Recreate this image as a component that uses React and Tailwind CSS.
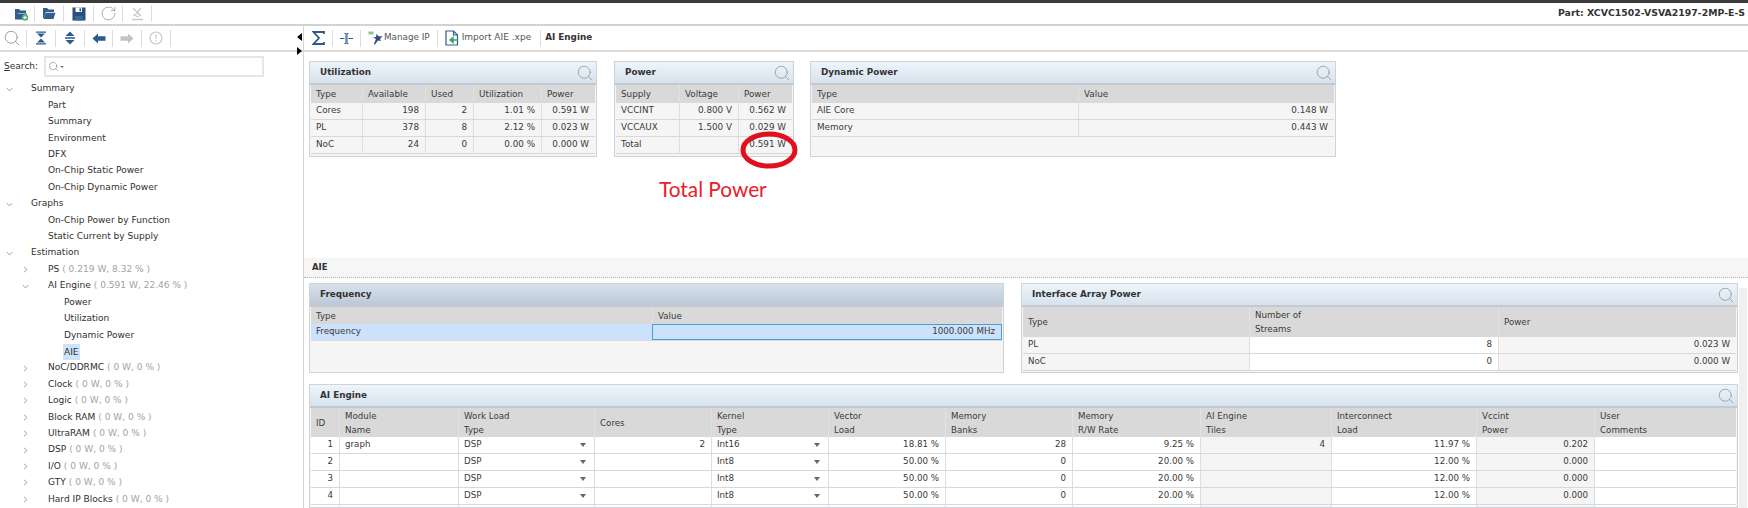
import React from 'react';
import { Search, RotateCw } from 'lucide-react';

const FONT = 'font-["DejaVu_Sans",sans-serif]';

const FolderNew = () => (
  <svg width="15" height="14" viewBox="0 0 15 14">
    <path d="M1 2h4l1.5 1.5H12V6H4L2 12H1z" fill="#2f5f8c" />
    <path d="M1 12.5 3.3 6.5H13l-1.5 6z" fill="#2f5f8c" />
    <circle cx="11" cy="10.5" r="3.2" fill="#4fb56a" />
    <path d="M9.2 10.5h3.6M11 8.7v3.6" stroke="#fff" strokeWidth="1" />
  </svg>
);

const FolderOpen = () => (
  <svg width="14" height="13" viewBox="0 0 14 13">
    <path d="M1 1h4l1.5 1.5H12V5H4L2 11H1z" fill="#2f5f8c" />
    <path d="M1.5 12 4 5.8h9.5L11.5 12z" fill="#2f5f8c" />
  </svg>
);

const Floppy = () => (
  <svg width="14" height="14" viewBox="0 0 14 14">
    <path d="M0.5 0.5h13v13h-13z" fill="#284f82" />
    <path d="M3.5 0.5h6.5v4.5H3.5z" fill="#fff" />
    <path d="M7.5 1.2h1.5v3H7.5z" fill="#284f82" />
    <path d="M3 9h8v4.5H3z" fill="#3d659a" />
  </svg>
);

const DisabledTool = () => (
  <svg width="13" height="14" viewBox="0 0 13 14" fill="none" stroke="#c8c8c8">
    <path d="M2 1 10 9M10 1 6 5.5M4.5 7 2.5 9" strokeWidth="1.3" />
    <path d="M1 12.5h11" strokeWidth="1.5" />
    <circle cx="6.5" cy="8" r="1.8" />
  </svg>
);

const CollapseAll = () => (
  <svg width="12" height="14" viewBox="0 0 12 14">
    <path d="M1 0.5h10v1.3H1zM1 12.2h10v1.3H1z" fill="#2c5c8c" />
    <path d="M2 2.6h8L6 6.4zM2 11.4h8L6 7.6z" fill="#2c5c8c" />
  </svg>
);

const ExpandAll = () => (
  <svg width="12" height="14" viewBox="0 0 12 14">
    <path d="M6 0.5 10.5 5h-9zM6 13.5 1.5 9h9z" fill="#2c5c8c" />
    <path d="M1 6h10v0.8H1zM1 7.3h10v0.8H1z" fill="#2c5c8c" />
  </svg>
);

const BlockArrow = ({ color, flip }) => (
  <svg width="14" height="11" viewBox="0 0 14 11" className={flip ? 'rotate-180' : ''}>
    <path d="M0.5 5.5 6 0.5v2.8h7.5v4.4H6v2.8z" fill={color} />
  </svg>
);

const InfoCircle = () => (
  <svg width="14" height="14" viewBox="0 0 14 14" fill="none" stroke="#c9c9c9">
    <circle cx="7" cy="7" r="6" strokeWidth="1.2" />
    <path d="M7 3.2v4.6M7 9.3v1.4" strokeWidth="1.3" />
  </svg>
);

const SigmaIcon = () => (
  <svg width="13" height="14" viewBox="0 0 13 14" fill="none" stroke="#2c5c8c" strokeWidth="1.8">
    <path d="M12 3V1H1.5L7 7l-5.5 6H12v-2" />
  </svg>
);

const FitIcon = () => (
  <svg width="13" height="15" viewBox="0 0 13 15" fill="none" stroke="#2c5c8c">
    <path d="M0 7.5h4.5M8.5 7.5H13" strokeWidth="1.2" />
    <path d="M4.5 2.5h1.5v10H4.5M8.5 2.5H7v10h1.5" strokeWidth="1" />
  </svg>
);

const ManageIpIcon = () => (
  <svg width="15" height="15" viewBox="0 0 15 15">
    <path d="M0.5 0.5h5v3h-5z" fill="#8cc88c" />
    <path d="M8.5 3 11 5.5 14.5 5 12 8l1 2-3-.5L6.5 14 6 12.5 8 8 5 6.5 8 6z" fill="#2c4f7c" />
  </svg>
);

const ImportIcon = () => (
  <svg width="14" height="16" viewBox="0 0 14 16" fill="none">
    <path d="M1 1h7.5L12.5 5v10H1z" stroke="#2c5c8c" strokeWidth="1.2" fill="#fff" />
    <path d="M8.5 1v4h4" stroke="#2c5c8c" strokeWidth="1.1" />
    <path d="M13 10H8M8 7.5 5 10l3 2.5z" stroke="#3da35d" strokeWidth="1.4" fill="#3da35d" />
  </svg>
);

const Sep = () => <div className="w-px h-[17px] bg-[#dddddd]" />;

const TreeRow = ({ level, open, label, stat, selected, leaf }) => {
  const chevronX = level === 0 ? 'w-[31px] pl-[6px]' : level === 1 ? 'w-[48px] pl-[22px]' : 'w-[64px]';
  return (
    <div className="h-[16.42px] flex items-center text-[9.05px] text-[#303030] whitespace-nowrap">
      <div className={`${chevronX} shrink-0 flex items-center`}>
        {!leaf && (
          <svg width="7" height="7" viewBox="0 0 7 7" fill="none" stroke="#a6a6a6" strokeWidth="1" className={open ? 'rotate-90' : ''}>
            <path d="M2 0.8 5 3.5 2 6.2" />
          </svg>
        )}
      </div>
      <span className={selected ? 'bg-[#cde3fb] px-[1px] -ml-[1px] leading-[16px]' : ''}>{label}</span>
      {stat && <span className="text-[#a3a3a3] ml-[3px]">{stat}</span>}
    </div>
  );
};

const tree = [
  { level: 0, open: true, label: 'Summary' },
  { level: 1, leaf: true, label: 'Part' },
  { level: 1, leaf: true, label: 'Summary' },
  { level: 1, leaf: true, label: 'Environment' },
  { level: 1, leaf: true, label: 'DFX' },
  { level: 1, leaf: true, label: 'On-Chip Static Power' },
  { level: 1, leaf: true, label: 'On-Chip Dynamic Power' },
  { level: 0, open: true, label: 'Graphs' },
  { level: 1, leaf: true, label: 'On-Chip Power by Function' },
  { level: 1, leaf: true, label: 'Static Current by Supply' },
  { level: 0, open: true, label: 'Estimation' },
  { level: 1, label: 'PS', stat: '( 0.219 W, 8.32 % )' },
  { level: 1, open: true, label: 'AI Engine', stat: '( 0.591 W, 22.46 % )' },
  { level: 2, leaf: true, label: 'Power' },
  { level: 2, leaf: true, label: 'Utilization' },
  { level: 2, leaf: true, label: 'Dynamic Power' },
  { level: 2, leaf: true, label: 'AIE', selected: true },
  { level: 1, label: 'NoC/DDRMC', stat: '( 0 W, 0 % )' },
  { level: 1, label: 'Clock', stat: '( 0 W, 0 % )' },
  { level: 1, label: 'Logic', stat: '( 0 W, 0 % )' },
  { level: 1, label: 'Block RAM', stat: '( 0 W, 0 % )' },
  { level: 1, label: 'UltraRAM', stat: '( 0 W, 0 % )' },
  { level: 1, label: 'DSP', stat: '( 0 W, 0 % )' },
  { level: 1, label: 'I/O', stat: '( 0 W, 0 % )' },
  { level: 1, label: 'GTY', stat: '( 0 W, 0 % )' },
  { level: 1, label: 'Hard IP Blocks', stat: '( 0 W, 0 % )' },
];

// one card: title bar + column header + rows, cells are {t, r (right align), w (white), drop}
const Card = ({ title, dark, noSearch, className, cols, headH, rowH, text, header, rows }) => (
  <div className={`${className} border border-[#ccd3da] bg-[#f5f5f5] flex flex-col overflow-hidden shrink-0`}>
    <div className={`h-[23px] shrink-0 flex items-center justify-between pl-[10px] pr-[2px] border-b-2 border-[#c3c9cf] bg-gradient-to-b ${dark ? 'from-[#d9e2ec] to-[#bcc8d6]' : 'from-[#eef5fb] to-[#d6e2ed]'}`}>
      <span className="text-[8.8px] font-bold text-[#333333]">{title}</span>
      {!noSearch && <Search size={18} strokeWidth={1} color="#8f8f8f" />}
    </div>
    <div className={`mx-[1px] ${text} text-[#3a3a3a]`}>
      <div className={`grid ${cols} ${headH} bg-[#d9d9d9]`}>
        {header.map((h, i) => (
          <div key={i} className="flex items-center pl-[5px] leading-[14px] whitespace-pre-line border-l border-[#e2e2e2] first:border-l-0">{h}</div>
        ))}
      </div>
      {rows.map((row, i) => (
        <div key={i} className={`grid ${cols} ${rowH} border-b border-[#d8d8d8]`}>
          {row.map((c, j) => (
            <div
              key={j}
              className={`flex items-center pl-[5px] pr-[6px] whitespace-nowrap ${c.focus ? 'border-[1.5px] border-[#4b9fd0]' : 'border-l border-[#dedede] first:border-l-0'} ${c.r ? 'justify-end' : 'justify-between'} ${c.w ? 'bg-white' : ''} ${c.sel ? 'bg-[#cce1fb]' : ''}`}
            >
              <span>{c.t}</span>
              {c.drop && <span className="w-0 h-0 mr-[2px] border-x-[3px] border-t-[4px] border-x-transparent border-t-[#666666]" />}
            </div>
          ))}
        </div>
      ))}
    </div>
  </div>
);

const r = (t) => ({ t, r: true });
const l = (t) => ({ t });
const wr = (t) => ({ t, r: true, w: true });
const wl = (t) => ({ t, w: true });
const dd = (t) => ({ t, w: true, drop: true });

const aieRow = (id, name, core, kernel, vec, banks, rw, tiles, inter, vcc) => [
  wr(id), wl(name), dd('DSP'), wr(core), dd(kernel), wr(vec), wr(banks), wr(rw), r(tiles), wr(inter), r(vcc), wl(''),
];

// row 5 only peeks in at the bottom edge, its text is not visible
const blankAieRow = Array.from({ length: 12 }, (_, i) => ({ t: '', w: i !== 8 && i !== 10 }));

export default function App() {
  return (
    <div className={`${FONT} w-[1748px] h-[508px] overflow-hidden bg-white flex flex-col relative`}>
      <div className="h-[3px] shrink-0 bg-[#3a3a3a]" />
      <div className="h-[23px] shrink-0 border-b-2 border-[#d2d2d2] flex items-center justify-between pr-[3px]">
        <div className="flex items-center h-full">
          <div className="w-[34px] flex justify-end pr-[5px]"><FolderNew /></div>
          <Sep />
          <div className="w-[28px] flex justify-center"><FolderOpen /></div>
          <Sep />
          <div className="w-[29px] flex justify-center"><Floppy /></div>
          <Sep />
          <div className="w-[28px] flex justify-center"><RotateCw size={17} strokeWidth={1.1} color="#9a9a9a" /></div>
          <Sep />
          <div className="w-[28px] flex justify-center"><DisabledTool /></div>
          <Sep />
        </div>
        <span className="text-[9.35px] font-bold text-[#333333]">Part: XCVC1502-VSVA2197-2MP-E-S</span>
      </div>

      <div className="flex-1 min-h-0 flex">
        <div className="w-[304px] shrink-0 border-r border-[#d4d4d4] flex flex-col relative">
          <div className="h-[26px] shrink-0 border-b-2 border-[#dcdcdc] flex items-center">
            <div className="w-[26px] flex justify-center"><Search size={18} strokeWidth={1.1} color="#8a8a8a" className="ml-[-2px]" /></div>
            <Sep />
            <div className="w-[28px] flex justify-center"><CollapseAll /></div>
            <Sep />
            <div className="w-[28px] flex justify-center"><ExpandAll /></div>
            <Sep />
            <div className="w-[27px] flex justify-center"><BlockArrow color="#2c5c8c" /></div>
            <Sep />
            <div className="w-[28px] flex justify-center"><BlockArrow color="#c4c4c4" flip /></div>
            <Sep />
            <div className="w-[28px] flex justify-center"><InfoCircle /></div>
            <Sep />
          </div>
          <div className="h-[27px] shrink-0 flex items-center pl-[4px] pt-[2px]">
            <span className="w-[40px] text-[9.05px] text-[#333333]"><span className="underline">S</span>earch:</span>
            <div className="w-[220px] h-[21px] border-2 border-[#e6e6e6] flex items-center pl-[2px]">
              <Search size={11} strokeWidth={1.2} color="#777777" />
              <span className="w-0 h-0 ml-[1px] border-x-[2px] border-t-[2px] border-x-transparent border-t-[#777777]" />
            </div>
          </div>
          <div className="flex-1 pt-[2px] overflow-hidden">
            {tree.map((row, i) => <TreeRow key={i} {...row} />)}
          </div>
          {/* splitter arrows */}
          <div className="absolute left-[297px] top-[7px] w-0 h-0 border-y-[4px] border-r-[5px] border-y-transparent border-r-black" />
          <div className="absolute left-[297px] top-[21px] w-0 h-0 border-y-[4px] border-l-[5px] border-y-transparent border-l-black" />
        </div>

        <div className="flex-1 min-w-0 flex flex-col relative">
          <div className="h-[26px] shrink-0 border-b-2 border-[#dcdcdc] flex items-center text-[8.8px] text-[#555555]">
            <div className="w-[28px] flex justify-center"><SigmaIcon /></div>
            <Sep />
            <div className="w-[27px] flex justify-center"><FitIcon /></div>
            <Sep />
            <div className="pl-[7px] pr-[7px] flex items-center gap-[1px]"><ManageIpIcon /><span>Manage IP</span></div>
            <Sep />
            <div className="pl-[7px] pr-[9px] flex items-center gap-[3px]"><ImportIcon /><span className="text-[9px]">Import AIE .xpe</span></div>
            <Sep />
            <span className="pl-[4px] font-bold text-[#333333]">AI Engine</span>
          </div>

          <div className="h-[206px] shrink-0 flex items-start pl-[5px] pt-[9px] gap-[17px]">
            <Card
              title="Utilization"
              className="w-[288px] h-[96px]"
              text="text-[8.8px]"
              cols="grid-cols-[51px_63px_48px_68px_1fr]"
              headH="h-[18px]"
              rowH="h-[17px]"
              header={['Type', 'Available', 'Used', 'Utilization', 'Power']}
              rows={[
                [l('Cores'), r('198'), r('2'), r('1.01 %'), r('0.591 W')],
                [l('PL'), r('378'), r('8'), r('2.12 %'), r('0.023 W')],
                [l('NoC'), r('24'), r('0'), r('0.00 %'), r('0.000 W')],
              ]}
            />
            <Card
              title="Power"
              className="w-[180px] h-[96px]"
              text="text-[8.8px]"
              cols="grid-cols-[63px_59px_1fr]"
              headH="h-[18px]"
              rowH="h-[17px]"
              header={['Supply', 'Voltage', 'Power']}
              rows={[
                [l('VCCINT'), r('0.800 V'), r('0.562 W')],
                [l('VCCAUX'), r('1.500 V'), r('0.029 W')],
                [l('Total'), r(''), r('0.591 W')],
              ]}
            />
            <Card
              title="Dynamic Power"
              className="w-[526px] h-[96px] -ml-[1px]"
              text="text-[8.8px]"
              cols="grid-cols-[266px_1fr]"
              headH="h-[18px]"
              rowH="h-[17px]"
              header={['Type', 'Value']}
              rows={[
                [l('AIE Core'), r('0.148 W')],
                [l('Memory'), r('0.443 W')],
              ]}
            />
          </div>

          <div className="h-[20px] shrink-0 bg-[#f6f6f6] border-b border-dotted border-[#b5b5b5] flex items-center pl-[8px] text-[8.5px] font-bold text-[#333333]">AIE</div>

          <div className="flex-1 min-h-0 flex flex-col pl-[5px] pr-[10px] pt-[5px] gap-[11px]">
            <div className="flex gap-[17px]">
              <Card
                title="Frequency"
                dark
                noSearch
                className="w-[695px] h-[90px]"
                text="text-[8.7px]"
                cols="grid-cols-[341px_1fr]"
                headH="h-[17px]"
                rowH="h-[17px]"
                header={['Type', 'Value']}
                rows={[[{ t: 'Frequency', sel: true }, { t: '1000.000 MHz', r: true, sel: true, focus: true }]]}
              />
              <Card
                title="Interface Array Power"
                className="w-[717px] h-[90px]"
                text="text-[8.7px]"
                cols="grid-cols-[226px_249px_1fr]"
                headH="h-[30px]"
                rowH="h-[17px]"
                header={['Type', 'Number of\nStreams', 'Power']}
                rows={[
                  [l('PL'), wr('8'), r('0.023 W')],
                  [l('NoC'), wr('0'), r('0.000 W')],
                ]}
              />
            </div>
            <Card
              title="AI Engine"
              className="w-[1429px] h-[124px]"
              text="text-[8.7px]"
              cols="grid-cols-[28px_119px_136px_117px_117px_117px_127px_128px_131px_145px_118px_1fr]"
              headH="h-[29px]"
              rowH="h-[17px]"
              header={['ID', 'Module\nName', 'Work Load\nType', 'Cores', 'Kernel\nType', 'Vector\nLoad', 'Memory\nBanks', 'Memory\nR/W Rate', 'AI Engine\nTiles', 'Interconnect\nLoad', 'Vccint\nPower', 'User\nComments']}
              rows={[
                aieRow('1', 'graph', '2', 'Int16', '18.81 %', '28', '9.25 %', '4', '11.97 %', '0.202'),
                aieRow('2', '', '', 'Int8', '50.00 %', '0', '20.00 %', '', '12.00 %', '0.000'),
                aieRow('3', '', '', 'Int8', '50.00 %', '0', '20.00 %', '', '12.00 %', '0.000'),
                aieRow('4', '', '', 'Int8', '50.00 %', '0', '20.00 %', '', '12.00 %', '0.000'),
                blankAieRow,
              ]}
            />
          </div>

          {/* red annotation drawn over the table */}
          <svg width="58" height="38" viewBox="0 0 58 38" fill="none" className="absolute left-[436px] top-[105px]">
            <ellipse cx="29" cy="19" rx="26" ry="16" stroke="#e0101c" strokeWidth="5" />
          </svg>
          <span className="absolute left-[355px] top-[151px] font-['Lato',sans-serif] text-[20.8px] leading-[24px] text-[#e8202a]">Total Power</span>

          {/* page scrollbar */}
          <div className="absolute right-[1px] top-[262px] bottom-0 w-[8px] bg-[#f0f0f0]" />
        </div>
      </div>
    </div>
  );
}
